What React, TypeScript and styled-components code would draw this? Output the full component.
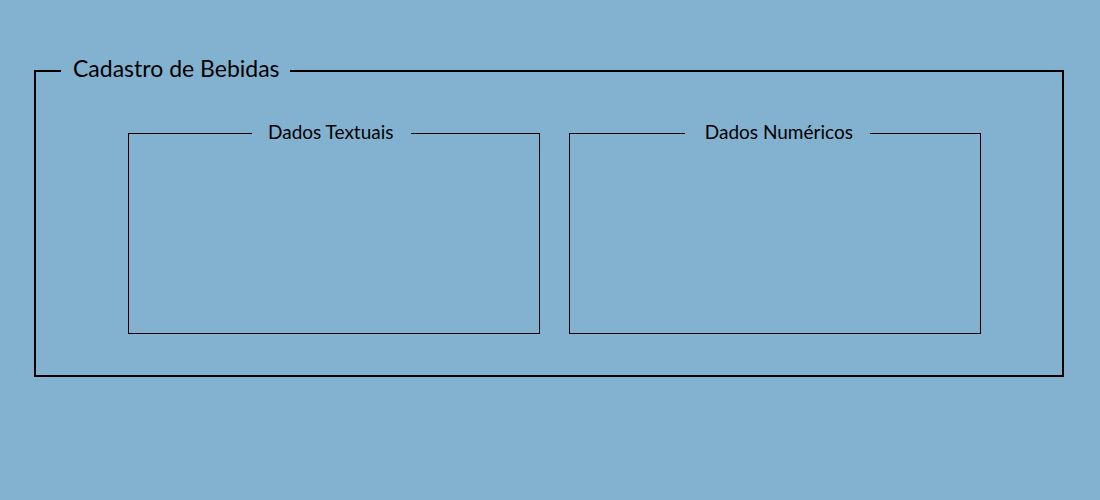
import React from "react";
import styled, { createGlobalStyle } from "styled-components";

const GlobalStyle = createGlobalStyle`
  * { box-sizing: border-box; }
  body {
    margin: 0;
    background: #82b2d0;
    color: #000;
    font-family: Lato, "Open Sans", sans-serif;
  }
`;

const Page = styled.main`
  padding: 55px 36px 0 34px;
`;

const Form = styled.form`
  margin: 0;
`;

const Group = styled.fieldset`
  min-width: 0;
  margin: 0;
  border: 2px solid #000;
  padding: 34px 81px 41px 92px;
`;

const Title = styled.legend`
  margin-left: -67px;
  padding: 0 10px 6px 12px;
  font-size: 23px;
  line-height: 26px;
`;

const Columns = styled.div`
  display: grid;
  grid-template-columns: 1fr 1fr;
  gap: 29px;
`;

const Panel = styled.fieldset`
  min-width: 0;
  height: 213px;
  margin: 0;
  border: 1px solid #000;
  padding: 0;
`;

const PanelTitle = styled.legend<{ $start: string; $inset: number }>`
  margin-left: ${({ $start }) => $start};
  padding: 0 17px 2px ${({ $inset }) => $inset}px;
  font-size: 19px;
  line-height: 22px;
`;

export default function App() {
  return (
    <Page>
      <GlobalStyle />
      <Form>
        <Group>
          <Title>Cadastro de Bebidas</Title>
          <Columns>
            <Panel>
              <PanelTitle $start="30%" $inset={16}>Dados Textuais</PanelTitle>
            </Panel>
            <Panel>
              <PanelTitle $start="28%" $inset={20}>Dados Numéricos</PanelTitle>
            </Panel>
          </Columns>
        </Group>
      </Form>
    </Page>
  );
}
